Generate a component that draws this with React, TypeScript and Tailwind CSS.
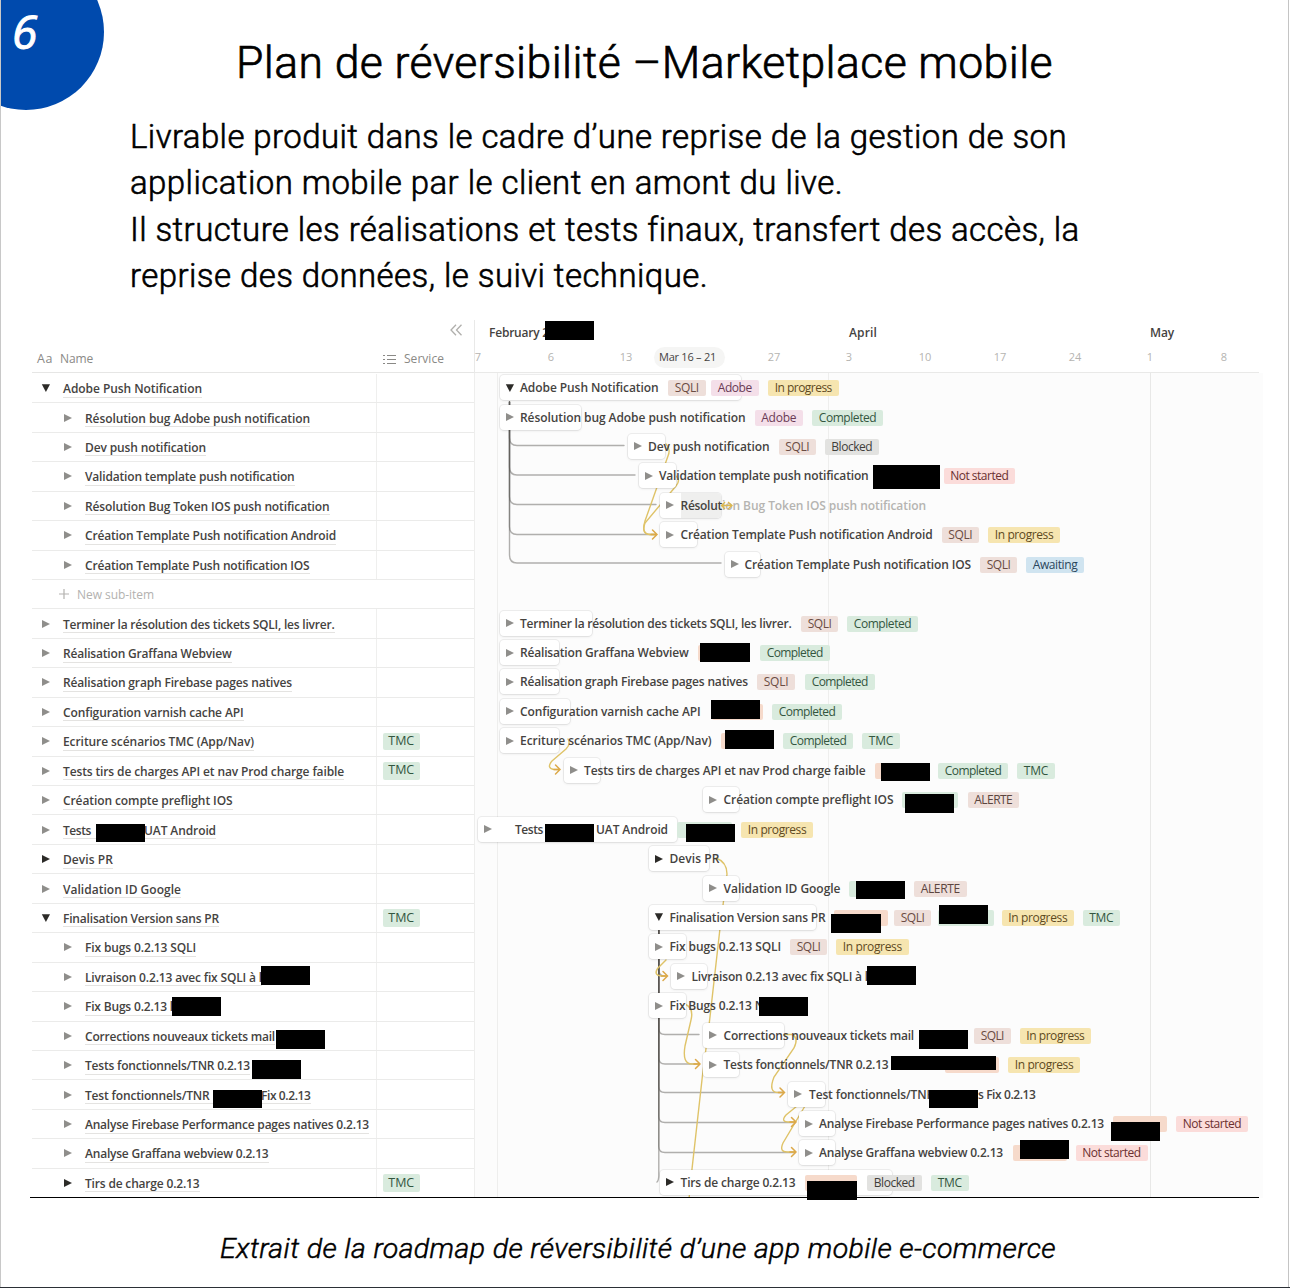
import { useLayoutEffect, useRef } from "react";

/* Text set to a known measure: tracking is adjusted so that it spans `w` pixels. */
function Fit({ w, children, className = "" }: { w: number; children: string; className?: string }) {
  const ref = useRef<HTMLSpanElement>(null);
  useLayoutEffect(() => {
    const el = ref.current;
    if (!el) return;
    const apply = () => {
      el.style.letterSpacing = "0px";
      const natural = el.getBoundingClientRect().width;
      el.style.letterSpacing = `${(w - natural) / children.length}px`;
    };
    apply();
    document.fonts?.ready.then(apply);
  }, [w, children]);
  return (
    <span ref={ref} className={`inline-block whitespace-pre ${className}`}>
      {children}
    </span>
  );
}

type Kind = "SQLI" | "ALERTE" | "Adobe" | "In progress" | "Completed" | "Blocked" | "Not started" | "Awaiting" | "TMC" | "peach" | "green";

const TAG: Record<Kind, string> = {
  SQLI: "bg-[#eedfda] text-[#6b4c43]",
  ALERTE: "bg-[#eedfda] text-[#5c453e]",
  Adobe: "bg-[#f4dfe9] text-[#6a3a55]",
  "In progress": "bg-[#f6e5b0] text-[#5e4a22]",
  Completed: "bg-[#d9ebde] text-[#33563f]",
  Blocked: "bg-[#e2e2e0] text-[#3f3d3a]",
  "Not started": "bg-[#fbdcda] text-[#6b3030]",
  Awaiting: "bg-[#d0e4f0] text-[#2a465c]",
  TMC: "bg-[#d9ebde] text-[#33563f]",
  peach: "bg-[#f6dacb] text-[#6b4c43]",
  green: "bg-[#d9ebde] text-[#33563f]",
};

type Tri = "down" | "right" | "dark";

function Triangle({ kind }: { kind: Tri }) {
  return (
    <svg width="10" height="10" viewBox="0 0 10 10" className="block shrink-0">
      {kind === "down" ? (
        <path d="M.8 1.2H9L4.900 9Z" fill="#2c2b28" />
      ) : (
        <path d="M1 1L9 5L1 9Z" fill={kind === "dark" ? "#2c2b28" : "#8f8e8b"} />
      )}
    </svg>
  );
}

/* Left table: [text, x, right edge] pieces of each name */
type Piece = [string, number, number];
type NameRow = { tri: Tri; pieces: Piece[]; tmc?: boolean; child?: boolean };

const NAMES: (NameRow | null)[] = [
  { tri: "down", pieces: [["Adobe Push Notification", 63, 202]] },
  { tri: "right", child: true, pieces: [["Résolution bug Adobe push notification", 85, 310]] },
  { tri: "right", child: true, pieces: [["Dev push notification", 85, 206]] },
  { tri: "right", child: true, pieces: [["Validation template push notification", 85, 294.5]] },
  { tri: "right", child: true, pieces: [["Résolution Bug Token IOS push notification", 85, 329.5]] },
  { tri: "right", child: true, pieces: [["Création Template Push notification Android", 85, 336]] },
  { tri: "right", child: true, pieces: [["Création Template Push notification IOS", 85, 309.5]] },
  null,
  { tri: "right", pieces: [["Terminer la résolution des tickets SQLI, les livrer.", 63, 334.5]] },
  { tri: "right", pieces: [["Réalisation Graffana Webview", 63, 231.5]] },
  { tri: "right", pieces: [["Réalisation graph Firebase pages natives", 63, 292]] },
  { tri: "right", pieces: [["Configuration varnish cache API", 63, 243.5]] },
  { tri: "right", tmc: true, pieces: [["Ecriture scénarios TMC (App/Nav)", 63, 254]] },
  { tri: "right", tmc: true, pieces: [["Tests tirs de charges API et nav Prod charge faible", 63, 344]] },
  { tri: "right", pieces: [["Création compte preflight IOS", 63, 232.5]] },
  { tri: "right", pieces: [["Tests", 63, 91], ["UAT Android", 144, 216]] },
  { tri: "dark", pieces: [["Devis PR", 63, 113]] },
  { tri: "right", pieces: [["Validation ID Google", 63, 181]] },
  { tri: "down", tmc: true, pieces: [["Finalisation Version sans PR", 63, 219]] },
  { tri: "right", child: true, pieces: [["Fix bugs 0.2.13 SQLI", 85, 196]] },
  { tri: "right", child: true, pieces: [["Livraison 0.2.13 avec fix SQLI à l", 85, 262]] },
  { tri: "right", child: true, pieces: [["Fix Bugs 0.2.13 l", 85, 173]] },
  { tri: "right", child: true, pieces: [["Corrections nouveaux tickets mail", 85, 275]] },
  { tri: "right", child: true, pieces: [["Tests fonctionnels/TNR 0.2.13", 85, 250]] },
  { tri: "right", child: true, pieces: [["Test fonctionnels/TNR", 85, 209.5], ["Fix 0.2.13", 261, 310.5]] },
  { tri: "right", child: true, pieces: [["Analyse Firebase Performance pages natives 0.2.13", 85, 369]] },
  { tri: "right", child: true, pieces: [["Analyse Graffana webview 0.2.13", 85, 268.5]] },
  { tri: "dark", child: true, tmc: true, pieces: [["Tirs de charge 0.2.13", 85, 199.5]] },
];

/* Timeline: card extent, name pieces and tags, in slide x coordinates */
type Task = { tri: Tri; bar: [number, number]; pieces: Piece[]; tags: [Kind, number, number][] };

const TASKS: (Task | null)[] = [
  { tri: "down", bar: [500, 741], pieces: [["Adobe Push Notification", 520, 658.5]], tags: [["SQLI", 668, 705.5], ["Adobe", 711, 758.5], ["In progress", 768, 838.5]] },
  { tri: "right", bar: [500, 581], pieces: [["Résolution bug Adobe push notification", 520, 745.5]], tags: [["Adobe", 754.5, 803], ["Completed", 812, 883]] },
  { tri: "right", bar: [628, 664.5], pieces: [["Dev push notification", 648, 769.5]], tags: [["SQLI", 778.5, 816], ["Blocked", 824.5, 879]] },
  { tri: "right", bar: [639, 676], pieces: [["Validation template push notification", 659, 868.5]], tags: [["Not started", 943.5, 1015]] },
  { tri: "right", bar: [660, 720.5], pieces: [["Résolut", 680.5, 722], ["ion Bug Token IOS push notification", 722, 926]], tags: [] },
  { tri: "right", bar: [660, 697], pieces: [["Création Template Push notification Android", 680.5, 932.5]], tags: [["SQLI", 941.5, 979], ["In progress", 988, 1060]] },
  { tri: "right", bar: [724.5, 760], pieces: [["Création Template Push notification IOS", 744.5, 971]], tags: [["SQLI", 980, 1017], ["Awaiting", 1026, 1084]] },
  null,
  { tri: "right", bar: [500, 591.5], pieces: [["Terminer la résolution des tickets SQLI, les livrer.", 520, 791.5]], tags: [["SQLI", 801, 838], ["Completed", 847, 918]] },
  { tri: "right", bar: [500, 559], pieces: [["Réalisation Graffana Webview", 520, 688.5]], tags: [["peach", 698, 750], ["Completed", 760, 829.5]] },
  { tri: "right", bar: [500, 559], pieces: [["Réalisation graph Firebase pages natives", 520, 748]], tags: [["SQLI", 757, 795], ["Completed", 805, 874.5]] },
  { tri: "right", bar: [500, 570], pieces: [["Configuration varnish cache API", 520, 700.5]], tags: [["peach", 712, 763], ["Completed", 772, 842]] },
  { tri: "right", bar: [500, 559], pieces: [["Ecriture scénarios TMC (App/Nav)", 520, 711.5]], tags: [["peach", 721, 774], ["Completed", 783, 853], ["TMC", 862, 900]] },
  { tri: "right", bar: [563.5, 600], pieces: [["Tests tirs de charges API et nav Prod charge faible", 584, 865.5]], tags: [["peach", 875, 929], ["Completed", 938, 1008], ["TMC", 1017, 1055]] },
  { tri: "right", bar: [703, 739], pieces: [["Création compte preflight IOS", 723.5, 893.5]], tags: [["green", 902, 958], ["ALERTE", 967.5, 1019]] },
  { tri: "right", bar: [478, 676.5], pieces: [["Tests", 515, 543], ["UAT Android", 596, 668]], tags: [["green", 677, 732], ["In progress", 741, 813]] },
  { tri: "dark", bar: [649, 709], pieces: [["Devis PR", 669.5, 719.5]], tags: [] },
  { tri: "right", bar: [703, 739], pieces: [["Validation ID Google", 723.5, 840.5]], tags: [["green", 849, 905], ["ALERTE", 914, 966.5]] },
  { tri: "down", bar: [649, 816], pieces: [["Finalisation Version sans PR", 669.5, 825.5]], tags: [["peach", 834, 888], ["SQLI", 894, 931], ["green", 937.5, 994], ["In progress", 1001.5, 1074], ["TMC", 1082.5, 1120]] },
  { tri: "right", bar: [649, 686], pieces: [["Fix bugs 0.2.13 SQLI", 669.5, 781]], tags: [["SQLI", 790, 827], ["In progress", 836, 908.5]] },
  { tri: "right", bar: [670.5, 707], pieces: [["Livraison 0.2.13 avec fix SQLI à l", 691.5, 868]], tags: [] },
  { tri: "right", bar: [649, 686], pieces: [["Fix Bugs 0.2.13 N", 669.5, 764]], tags: [] },
  { tri: "right", bar: [703, 784], pieces: [["Corrections nouveaux tickets mail", 723.5, 914]], tags: [["SQLI", 974, 1010.5], ["In progress", 1019.5, 1091]] },
  { tri: "right", bar: [703, 739], pieces: [["Tests fonctionnels/TNR 0.2.13", 723.5, 888.5]], tags: [["peach", 945, 999], ["In progress", 1008, 1080]] },
  { tri: "right", bar: [788, 824.5], pieces: [["Test fonctionnels/TNR", 809, 934], ["s Fix 0.2.13", 978, 1035.5]], tags: [] },
  { tri: "right", bar: [799, 835], pieces: [["Analyse Firebase Performance pages natives 0.2.13", 819, 1104]], tags: [["peach", 1113, 1167], ["Not started", 1176, 1248]] },
  { tri: "right", bar: [799, 835], pieces: [["Analyse Graffana webview 0.2.13", 819, 1003]], tags: [["peach", 1013, 1067], ["Not started", 1075.5, 1147.5]] },
  { tri: "dark", bar: [660, 891.5], pieces: [["Tirs de charge 0.2.13", 680.5, 795.5]], tags: [["peach", 805, 857], ["Blocked", 867, 921.5], ["TMC", 931, 968.5]] },
];

/* Redaction blocks: x, y, width, height */
const MASKS: [number, number, number, number][] = [
  [545, 321, 49, 19], [873, 465, 67, 24], [700, 643, 50, 19], [711, 700, 49, 19], [725, 730, 49, 19],
  [881, 763, 49, 18], [905, 794, 49, 19], [96, 824, 49, 18], [545, 824, 49, 18], [686, 824, 49, 18],
  [856, 881, 49, 18], [831, 914, 50, 19], [939, 905, 49, 19], [261, 966, 49, 19], [867, 966, 49, 19],
  [172, 997, 49, 19], [759, 997, 49, 19], [276, 1030, 49, 19], [919, 1030, 49, 19], [252, 1060, 49, 19],
  [891, 1056, 105, 14], [213, 1090, 49, 18], [929, 1090, 49, 18], [1111, 1122, 49, 19], [1020, 1140, 49, 19],
  [807, 1181, 50, 19],
];

const DAYS: [string, number][] = [
  ["7", 478], ["6", 551], ["13", 626], ["27", 774], ["3", 849], ["10", 925], ["17", 1000], ["24", 1075], ["1", 1150], ["8", 1224],
];

const TREE_ONE: [number, number][] = [[445.5, 624], [475, 635], [504.5, 656], [534.5, 655], [563, 721]];
const TREE_TWO: [number, number][] = [[976, 664], [1034.5, 699], [1064, 697], [1092.5, 783], [1122.5, 795], [1152.5, 795]];

const LINKS = [
  "M666 444Q671 449 668 456L645 521Q641 534 650 534.500H656",
  "M676 476Q681 480 676 486L645 523Q641 534 650 534.500H656",
  "M568 739Q571 744 566 749L552 761Q546 768 554 769.500H559",
  "M716 858Q727 862 727 874L719.700 931L709.300 1023L702.300 1077L692 1169L689 1199",
  "M666 960L658 968Q653 975 661 976H667",
  "M685 1004Q694 1008 691 1020L685 1046Q682 1064 692 1064H699",
  "M784 1034.500H792Q799 1038 794 1048L774 1077Q768 1092.500 778 1092.500H783",
  "M797 1106L786 1115Q780 1122 789 1122H795",
  "M805 1106L783 1143Q779 1152 787 1152H795",
];
const HEADS: [number, number][] = [[657, 534.5], [560, 769.5], [667.5, 976], [700, 1064], [784.5, 1092.5], [796, 1122], [796, 1152]];

const X0 = 474;

function TableRow({ row }: { row: NameRow | null }) {
  if (!row) {
    return (
      <div className="flex h-[29.45px] items-center border-b border-[#ebebea] pl-[27px] text-[12px] font-normal text-[#b3b2af]">
        <svg width="10" height="10" viewBox="0 0 10 10" className="mr-2 block">
          <path d="M5 0V10M0 5H10" stroke="#b3b2af" strokeWidth="1.200" />
        </svg>
        <Fit w={77} className="pt-px">New sub-item</Fit>
      </div>
    );
  }
  const start = row.child ? 85 : 63;
  const end = row.pieces[row.pieces.length - 1][2];
  return (
    <div className="flex h-[29.45px] border-b border-[#ebebea] last:border-transparent">
      <div className={`flex w-[344.5px] shrink-0 items-center border-r border-[#efefee] ${row.child ? "pl-[30.5px]" : "pl-[8.5px]"}`}>
        <Triangle kind={row.tri} />
        <div
          className="relative mt-[2px] ml-[12.5px] flex h-[17px] items-center border-b border-[#e4e3e1] leading-[17px]"
          style={{ width: end - start }}
        >
          {row.pieces.map(([t, a, b], i) => (
            <span key={t} style={{ marginLeft: i ? a - row.pieces[i - 1][2] : 0 }}>
              <Fit w={b - a}>{t}</Fit>
            </span>
          ))}
        </div>
      </div>
      {row.tmc && (
        <div className="flex items-center pl-[6.5px]">
          <span className="flex h-[17.5px] w-[36.5px] items-center justify-center rounded-[2px] bg-[#d9ebde] text-[12.5px] font-normal text-[#33563f]">
            <Fit w={26}>TMC</Fit>
          </span>
        </div>
      )}
    </div>
  );
}

function TimelineRow({ task, active }: { task: Task | null; active: boolean }) {
  if (!task) return <div className="h-[29.45px]" />;
  const [a, b] = task.bar;
  return (
    <div className="relative h-[29.45px]">
      <div
        className="absolute top-[1.5px] flex h-[25px] overflow-hidden rounded-[4px] bg-white shadow-[0_0_0_1px_rgba(15,15,15,0.06),0_1px_3px_rgba(15,15,15,0.08)]"
        style={{ left: a - X0, width: b - a }}
      >
        <div className="flex w-[20.5px] shrink-0 items-center justify-center">
          <Triangle kind={task.tri} />
        </div>
        {active && <div className="flex-1 bg-[#efefee]" />}
      </div>
      {task.pieces.map(([t, l, r], i) => (
        <span
          key={t}
          className={`absolute top-[5.5px] leading-[18px] ${active && i === 1 ? "text-[#b5b4b1]" : ""}`}
          style={{ left: l - X0 }}
        >
          <Fit w={r - l}>{t}</Fit>
        </span>
      ))}
      {task.tags.map(([k, l, r]) => (
        <span
          key={k + l}
          className={`absolute top-[6.5px] flex h-[16px] items-center justify-center rounded-[2px] text-[12px] leading-[16px] font-normal ${TAG[k]}`}
          style={{ left: l - X0, width: r - l }}
        >
          {k !== "peach" && k !== "green" && <Fit w={r - l - 13.5}>{k}</Fit>}
        </span>
      ))}
    </div>
  );
}

export default function App() {
  return (
    <div className="relative h-[1288px] w-[1290px] overflow-hidden bg-white font-['Roboto',sans-serif] text-black">
      <div className="absolute top-[-46px] left-[-52px] h-[156px] w-[156px] rounded-full bg-[#004aad]" />
      <div className="absolute top-[-1px] left-[12px] font-['Open_Sans',sans-serif] text-[46px] leading-[64px] font-normal text-white italic [-webkit-text-stroke:1px_white]">6</div>

      <header className="flex h-[320px] flex-col items-start">
        <h1 className="mt-[36px] ml-[236px] text-[44.5px] leading-[54px] font-light [-webkit-text-stroke:0.7px_black]">
          <Fit w={817}>Plan de réversibilité –Marketplace mobile</Fit>
        </h1>
        <p className="mt-[24px] ml-[130px] flex flex-col items-start text-[33px] leading-[46.4px] font-light [-webkit-text-stroke:0.6px_black]">
          <Fit w={937}>Livrable produit dans le cadre d’une reprise de la gestion de son</Fit>
          <Fit w={713}>application mobile par le client en amont du live.</Fit>
          <Fit w={949}>Il structure les réalisations et tests finaux, transfert des accès, la</Fit>
          <Fit w={578}>reprise des données, le suivi technique.</Fit>
        </p>
      </header>

      <main className="ml-[30px] flex h-[878px] w-[1233px] font-['Open_Sans','Noto_Sans',sans-serif] text-[12px] font-semibold text-[#45433f]">
        <section className="w-[444px] shrink-0 pl-[2px]">
          <div className="flex h-[53px] flex-col justify-between border-b border-[#e6e6e5] font-normal text-[#8a8986]">
            <svg width="12" height="12" viewBox="0 0 12 12" className="mt-[4px] mr-[12px] self-end" fill="none" stroke="#b0afac" strokeWidth="1.300">
              <path d="M6 .8L1 6L6 11.200M11.500 .8L6.500 6L11.500 11.200" />
            </svg>
            <div className="mb-[4px] flex items-center leading-[18px]">
              <span className="ml-[5px] w-[23px] text-[12.5px]"><Fit w={16}>Aa</Fit></span>
              <span className="w-[323px]"><Fit w={33}>Name</Fit></span>
              <svg width="13" height="11" viewBox="0 0 13 11" stroke="#8a8986" strokeWidth="1.200">
                <path d="M4 1.500H13M4 5.500H13M4 9.500H13M0 1.500H2M0 5.500H2M0 9.500H2" />
              </svg>
              <span className="ml-[8px]"><Fit w={40}>Service</Fit></span>
            </div>
          </div>
          <div className="pt-[0.900px]">
            {NAMES.map((row, i) => <TableRow key={i} row={row} />)}
          </div>
        </section>

        <section className="flex w-[789px] flex-col">
          <div className="relative h-[53px] w-[785px] border-b border-l border-[#e9e9e8]">
            <span className="absolute top-[4px] left-[14px] leading-[18px]"><Fit w={60}>February 2</Fit></span>
            <span className="absolute top-[4px] left-[374px] leading-[18px]"><Fit w={28}>April</Fit></span>
            <span className="absolute top-[4px] left-[675px] leading-[18px]"><Fit w={24}>May</Fit></span>
            <span className="absolute top-[27px] left-[179px] flex h-[21px] w-[71px] items-center rounded-full bg-[#f5f5f4] pl-[5px] text-[11px] font-normal">
              <Fit w={57}>Mar 16 – 21</Fit>
            </span>
            {DAYS.map(([d, x]) => (
              <span key={d} className="absolute top-[28px] w-[20px] text-center text-[11px] leading-[18px] font-normal text-[#b5b4b1]" style={{ left: x - X0 - 11 }}>
                {d}
              </span>
            ))}
          </div>
          <div className="relative flex-1 bg-[#fcfcfc]">
            <div className="absolute inset-y-0 left-0 w-px bg-[#eeeeed]" />
            <div className="absolute inset-y-0 left-[23px] w-px bg-[#eeeeed]" />
            <div className="absolute inset-y-0 left-[354px] w-px bg-[#eeeeed]" />
            <div className="absolute inset-y-0 left-[676px] w-px bg-[#e8e8e7]" />
            <svg className="absolute top-0 left-0" width="785" height="825" viewBox="474 373 785 825" fill="none" strokeLinecap="round">
              <g stroke="#55534e" strokeOpacity="0.450" strokeWidth="1.400">
                {TREE_ONE.map(([y, x]) => (
                  <path key={y} d={`M509.500 402V${y - 8}Q509.500 ${y} 517 ${y}H${x}`} />
                ))}
                {TREE_TWO.map(([y, x]) => (
                  <path key={y} d={`M658.800 930V${y - 6}Q658.800 ${y} 665 ${y}H${x}`} />
                ))}
                <path d="M658.800 930V1176Q658.500 1181 657 1182" />
              </g>
              <g stroke="#dfc368" strokeWidth="1.400">
                {LINKS.map((d) => <path key={d} d={d} />)}
              </g>
              <g stroke="#dca94a" strokeWidth="1.500">
                {HEADS.map(([x, y]) => (
                  <path key={`${x}-${y}`} d={`M${x - 4.5} ${y - 4.5}L${x} ${y}L${x - 4.5} ${y + 4.5}M${x - 6} ${y}H${x}`} />
                ))}
              </g>
            </svg>
            <div className="pt-[0.600px]">
              {TASKS.map((t, i) => <TimelineRow key={i} task={t} active={i === 4} />)}
            </div>
            <svg className="absolute top-[127px] left-[246px]" width="16" height="11" viewBox="0 0 16 11" fill="none" stroke="#dcb850" strokeWidth="1.300">
              <path d="M1 5.500H12M5 2L1.500 5.500L5 9M8 2L12 5.500L8 9" />
            </svg>
          </div>
        </section>
      </main>
      <div className="absolute top-[1197px] left-[30px] h-px w-[1229px] bg-black" />

      {MASKS.map(([x, y, w, h]) => (
        <div key={`${x}-${y}`} className="absolute bg-black" style={{ left: x, top: y, width: w, height: h }} />
      ))}

      <footer className="mt-[34px] ml-[220px] text-[28.5px] leading-[34px] font-light italic [-webkit-text-stroke:0.5px_black]">
        <Fit w={836}>Extrait de la roadmap de réversibilité d’une app mobile e-commerce</Fit>
      </footer>

      <div className="absolute inset-y-0 left-0 w-px bg-[#c8c8c8]" />
      <div className="absolute inset-y-0 left-[1288px] w-px bg-[#c4c4c4]" />
      <div className="absolute inset-x-0 bottom-0 h-px bg-[#2b3036]" />
    </div>
  );
}
